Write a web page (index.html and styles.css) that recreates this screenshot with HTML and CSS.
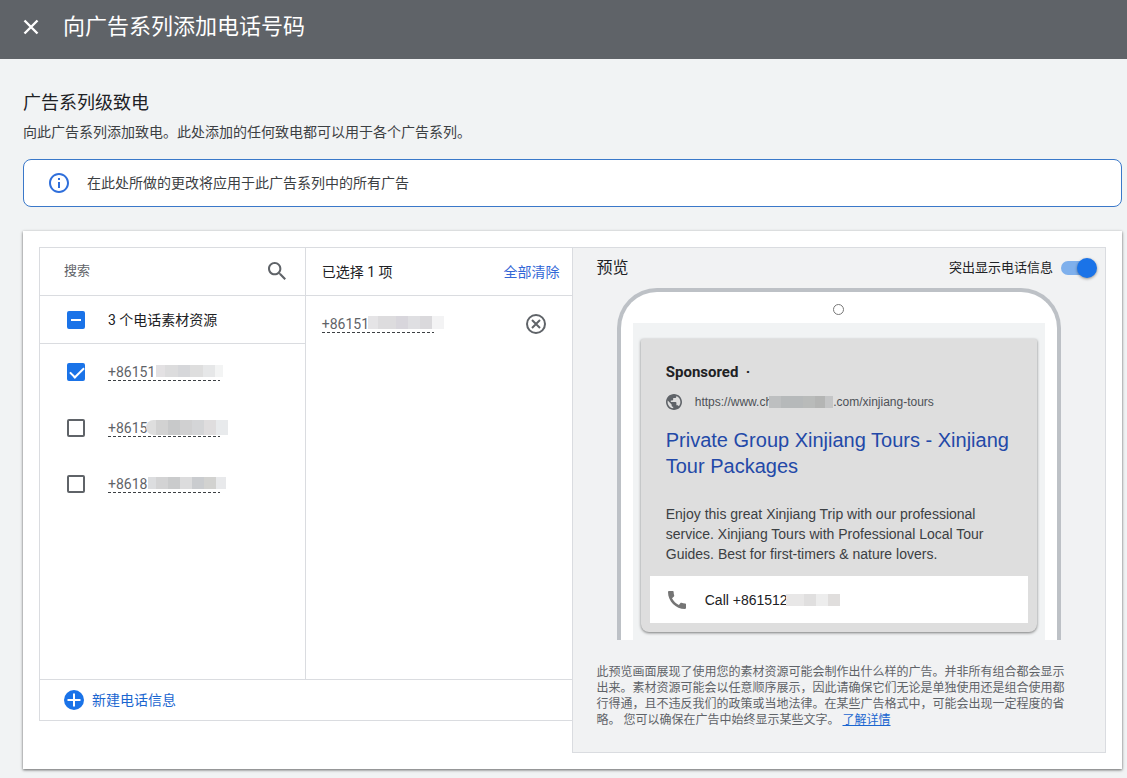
FILE: index.html
```html
<!DOCTYPE html>
<html lang="zh-CN">
<head>
<meta charset="utf-8">
<meta name="viewport" content="width=device-width, initial-scale=1">
<title>向广告系列添加电话号码</title>
<link rel="stylesheet" href="styles.css">
</head>
<body>
<header class="topbar">
  <button class="icon-button" type="button" aria-label="关闭">
    <svg class="icon-close" viewBox="0 0 16 16" aria-hidden="true"><path d="M1.5 1.5l13 13M14.5 1.5l-13 13"/></svg>
  </button>
  <h1 class="topbar-title">向广告系列添加电话号码</h1>
</header>

<main class="page">
  <h2 class="section-title">广告系列级致电</h2>
  <p class="section-text">向此广告系列添加致电。此处添加的任何致电都可以用于各个广告系列。</p>

  <div class="notice">
    <svg class="icon-info" viewBox="2 2 20 20" aria-hidden="true"><path d="M11 7h2v2h-2zm0 4h2v6h-2zm1-9C6.48 2 2 6.48 2 12s4.480 10 10 10 10-4.480 10-10S17.520 2 12 2zm0 18c-4.410 0-8-3.590-8-8s3.590-8 8-8 8 3.590 8 8-3.590 8-8 8z"/></svg>
    <span>在此处所做的更改将应用于此广告系列中的所有广告</span>
  </div>

  <div class="card">
    <div class="picker">
      <section class="column">
        <div class="row search-row">
          <input class="search" type="text" placeholder="搜索" aria-label="搜索">
          <button class="icon-button" type="button" aria-label="搜索">
            <svg class="icon-search" viewBox="3 3 17.500 17.500" aria-hidden="true"><path d="M15.500 14h-.79l-.28-.27C15.410 12.590 16 11.110 16 9.500 16 5.910 13.090 3 9.500 3S3 5.910 3 9.500 5.910 16 9.500 16c1.610 0 3.090-.59 4.230-1.570l.27.28v.79l5 4.990L20.490 19l-4.990-5zm-6 0C7.010 14 5 11.990 5 9.500S7.010 5 9.500 5 14 7.010 14 9.500 11.990 14 9.500 14z"/></svg>
          </button>
        </div>
        <label class="row option">
          <input class="checkbox checkbox-mixed" type="checkbox" aria-checked="mixed">
          <span>3 个电话素材资源</span>
        </label>
        <label class="option option-tall">
          <input class="checkbox" type="checkbox" checked>
          <span class="number">+86151<span class="mask mask-a"></span></span>
        </label>
        <label class="option option-tall">
          <input class="checkbox" type="checkbox">
          <span class="number">+86151<span class="mask mask-b"></span></span>
        </label>
        <label class="option option-tall">
          <input class="checkbox" type="checkbox">
          <span class="number">+8618<span class="mask mask-c"></span></span>
        </label>
      </section>

      <section class="column column-selected">
        <div class="row selected-head">
          <span>已选择 1 项</span>
          <button class="text-button" type="button">全部清除</button>
        </div>
        <div class="selected-item">
          <span class="number">+86151<span class="mask mask-d"></span></span>
          <button class="icon-button" type="button" aria-label="移除">
            <svg class="icon-remove" viewBox="0 0 20 20" aria-hidden="true"><circle cx="10" cy="10" r="9"/><path d="M6 6l8 8M14 6l-8 8"/></svg>
          </button>
        </div>
      </section>

      <div class="create">
        <button class="text-button create-button" type="button">
          <svg class="icon-add" viewBox="0 0 20 20" aria-hidden="true"><circle cx="10" cy="10" r="10"/><path d="M10 3.500v13M3.500 10h13"/></svg>
          <span>新建电话信息</span>
        </button>
      </div>
    </div>

    <section class="preview">
      <div class="preview-head">
        <h3 class="preview-title">预览</h3>
        <label class="toggle-label">
          <span>突出显示电话信息</span>
          <input class="toggle" type="checkbox" role="switch" checked>
        </label>
      </div>
      <div class="phone">
        <div class="phone-camera"></div>
        <div class="phone-screen">
          <article class="ad">
            <div class="ad-body">
              <div class="ad-sponsored">Sponsored&nbsp; ·</div>
              <div class="ad-url">
                <svg class="icon-globe" viewBox="2 2 20 20" aria-hidden="true"><path d="M12 2C6.480 2 2 6.480 2 12s4.480 10 10 10 10-4.480 10-10S17.520 2 12 2zm-1 17.930c-3.950-.49-7-3.850-7-7.930 0-.62.080-1.210.21-1.790L9 15v1c0 1.100.9 2 2 2v1.930zm6.900-2.540c-.26-.81-1-1.390-1.900-1.390h-1v-3c0-.55-.45-1-1-1H8v-2h2c.55 0 1-.45 1-1V7h2c1.100 0 2-.9 2-2v-.41c2.930 1.190 5 4.060 5 7.410 0 2.080-.8 3.970-2.100 5.390z"/></svg>
                <span>https://www.ch</span><span class="url-mask"></span><span>.com/xinjiang-tours</span>
              </div>
              <div class="ad-title">Private Group Xinjiang Tours - Xinjiang Tour Packages</div>
              <p class="ad-text">Enjoy this great Xinjiang Trip with our professional service. Xinjiang Tours with Professional Local Tour Guides. Best for first-timers &amp; nature lovers.</p>
            </div>
            <div class="ad-call">
              <svg class="icon-phone" viewBox="3 3 18 18" aria-hidden="true"><path d="M20.010 15.380c-1.230 0-2.420-.2-3.530-.56-.35-.12-.74-.03-1.010.24l-1.570 1.970c-2.830-1.350-5.480-3.900-6.890-6.830l1.950-1.660c.27-.28.35-.67.24-1.020-.37-1.110-.56-2.300-.56-3.530 0-.54-.45-.99-.99-.99H4.190C3.650 3 3 3.240 3 3.990 3 13.280 10.730 21 20.010 21c.71 0 .99-.63.99-1.180v-3.450c0-.54-.45-.99-.99-.99z"/></svg>
              <span>Call +861512</span><span class="call-mask"></span>
            </div>
          </article>
        </div>
      </div>
      <p class="preview-note"><span>此预览画面展现了使用您的素材资源可能会制作出什么样的广告。并非所有组合都会显示出来。素材资源可能会以任意顺序展示，因此请确保它们无论是单独使用还是组合使用都行得通，且不违反我们的政策或当地法律。在某些广告格式中，可能会出现一定程度的省略。</span> <span>您可以确保在广告中始终显示某些文字。</span> <a class="link" href="#">了解详情</a></p>
    </section>
  </div>
</main>
</body>
</html>
```
FILE: styles.css
```css
* {
  box-sizing: border-box;
}

body {
  margin: 0;
  background: #f1f3f4;
  color: #202124;
  font: 14px/20px Roboto, "Noto Sans CJK SC", sans-serif;
}

h1, h2, h3, p {
  margin: 0;
  font-weight: 400;
}

button, input {
  font: inherit;
  color: inherit;
  margin: 0;
}

button {
  padding: 0;
  border: 0;
  background: none;
  cursor: pointer;
}

svg {
  display: block;
  flex: none;
  fill: currentColor;
}

.icon-button {
  display: flex;
  flex: none;
  color: #5f6368;
}

.text-button {
  color: #3367d6;
}

/* Top bar */
.topbar {
  display: flex;
  align-items: center;
  gap: 24px;
  padding: 0 23px 5px;
  background: #5f6368;
}

.topbar .icon-button,
.topbar-title {
  color: #fff;
}

.topbar-title {
  font-size: 22px;
  line-height: 54px;
  font-weight: 400;
}

.icon-close {
  width: 16px;
  height: 16px;
  fill: none;
  stroke: currentColor;
  stroke-width: 2.4;
}

/* Page */
.page {
  padding: 32px 5px 9px 23px;
}

.section-title {
  font-size: 18px;
  line-height: 24px;
}

.section-text {
  margin-top: 7px;
  color: #3c4043;
}

.notice {
  display: flex;
  align-items: center;
  gap: 18px;
  min-height: 48px;
  margin-top: 17px;
  padding: 0 25px;
  border: 1px solid #3a78c9;
  border-radius: 8px;
  background: #fff;
  color: #3c4043;
}

.icon-info {
  width: 20px;
  height: 20px;
  color: #2f6fdb;
}

.card {
  display: grid;
  grid-template-columns: calc(50% - 1px) 1fr;
  align-items: start;
  margin-top: 24px;
  padding: 16px;
  background: #fff;
  box-shadow: 0 1px 3px rgba(0, 0, 0, .45), 0 1px 2px rgba(0, 0, 0, .2);
}

/* Number picker */
.picker {
  display: grid;
  grid-template-columns: calc(50% - 1px) 1fr;
  border: 1px solid #dadce0;
  border-right: 0;
}

.column {
  min-height: 431px;
}

.column-selected {
  border-left: 1px solid #dadce0;
}

.row {
  display: flex;
  align-items: center;
  min-height: 48px;
  border-bottom: 1px solid #dadce0;
}

.search-row {
  padding: 0 19px 2px 24px;
}

.search {
  flex: 1;
  min-width: 0;
  padding: 0;
  border: 0;
  outline: 0;
  background: none;
  font-size: 13px;
}

.search::placeholder {
  color: #5f6368;
  opacity: 1;
}

.icon-search {
  width: 18px;
  height: 18px;
}

.option {
  display: flex;
  align-items: center;
  gap: 23px;
  padding-left: 27px;
}

.option-tall {
  min-height: 56px;
}

.checkbox {
  position: relative;
  flex: none;
  width: 18px;
  height: 18px;
  border: 2px solid #5f6368;
  border-radius: 2px;
  appearance: none;
}

.checkbox:checked,
.checkbox-mixed {
  border-color: #1a73e8;
  background: #1a73e8;
}

.checkbox:checked::after {
  content: "";
  position: absolute;
  left: 4px;
  top: -1px;
  width: 6px;
  height: 12px;
  border: solid #fff;
  border-width: 0 2px 2px 0;
  transform: rotate(45deg);
}

.checkbox-mixed::after {
  content: "";
  position: absolute;
  left: 2px;
  top: 6px;
  width: 10px;
  height: 2px;
  background: #fff;
}

.number {
  position: relative;
  width: 112px;
  line-height: 17px;
  color: #5f6368;
  background: repeating-linear-gradient(90deg, #3c4043 0 3px, transparent 3px 5px) left bottom / 100% 1px no-repeat;
}

/* Pixelated cover over the private digits */
.mask {
  position: absolute;
  left: 48px;
  top: 1px;
  width: 67px;
  height: 12px;
  background: linear-gradient(90deg, #e3e1e3 0 9px, #dcdcdd 9px 22px, #d6d7da 22px 34px, #dedede 34px 47px, #e6e7e8 47px 59px, #f3f4f4 59px);
}

.mask-b {
  left: 38px;
  top: 0;
  width: 82px;
  height: 15px;
  border-radius: 8px 0 0 8px;
  background: linear-gradient(90deg, #dedede 0 10px, #d2d2d2 10px 22px, #c8c9ca 22px 34px, #d0d0d1 34px 46px, #d4d5d7 46px 58px, #dfddde 58px 70px, #e8eaec 70px);
}

.mask-c {
  left: 40px;
  width: 78px;
  background: linear-gradient(90deg, #dcdddf 0 8px, #d3d3d4 8px 20px, #cacbcc 20px 32px, #dcdcdd 32px 44px, #cacccf 44px 56px, #d2d2d0 56px 68px, #e8e9eb 68px);
}

.mask-d {
  left: 46px;
  top: 0;
  width: 76px;
  height: 13px;
  background: linear-gradient(90deg, #e5e4e6 0 10px, #dddcde 10px 28px, #d8d6dc 28px 40px, #dfdfe2 40px 52px, #dad9dc 52px 64px, #f3f3f4 64px);
}

.selected-head {
  justify-content: space-between;
  padding: 0 12px 0 16px;
}

.selected-item {
  display: flex;
  align-items: center;
  justify-content: space-between;
  min-height: 56px;
  padding: 0 26px 0 16px;
}

.icon-remove {
  width: 20px;
  height: 20px;
  fill: none;
  stroke: currentColor;
  stroke-width: 2;
}

.create {
  grid-column: 1 / -1;
  padding: 10px 24px;
  border-top: 1px solid #dadce0;
}

.create-button {
  display: flex;
  align-items: center;
  gap: 8px;
  color: #1a66d0;
}

.icon-add {
  width: 20px;
  height: 20px;
  fill: #1a73e8;
  stroke: none;
}

.icon-add path {
  stroke: #fff;
  stroke-width: 2;
}

/* Preview */
.preview {
  padding-bottom: 24px;
  border: 1px solid #dadce0;
  background: #f1f2f3;
}

.preview-head {
  display: flex;
  align-items: center;
  justify-content: space-between;
  min-height: 40px;
  padding: 0 8px 0 24px;
}

.preview-title {
  font-size: 16px;
}

.toggle-label {
  display: flex;
  align-items: center;
  gap: 8px;
  font-size: 13px;
}

.toggle {
  position: relative;
  width: 36px;
  height: 20px;
  appearance: none;
}

.toggle::before {
  content: "";
  position: absolute;
  left: 0;
  right: 2px;
  top: 3px;
  height: 14px;
  border-radius: 7px;
  background: #7fb0ec;
}

.toggle::after {
  content: "";
  position: absolute;
  right: 0;
  top: 0;
  width: 20px;
  height: 20px;
  border-radius: 50%;
  background: #1a73e8;
  box-shadow: 0 1px 3px rgba(0, 0, 0, .4);
}

.phone {
  max-width: 444px;
  margin: 0 auto;
  padding: 0 12px;
  border: 4px solid #bdc1c6;
  border-bottom: 0;
  border-radius: 40px 40px 0 0;
  background: #fff;
}

.phone-camera {
  width: 11px;
  height: 11px;
  margin: 12px auto 8px;
  border: 1px solid #777;
  border-radius: 50%;
}

.phone-screen {
  padding: 16px 8px 8px;
  background: #f1f3f4;
}

.ad {
  padding: 0 9px 9px;
  border-radius: 2px 2px 8px 8px;
  background: #dedede;
  box-shadow: 0 1px 3px rgba(0, 0, 0, .5);
  color: #3c4043;
  font-family: "Liberation Sans", Arial, sans-serif;
}

.ad-body {
  padding: 23px 16px 12px;
}

.ad-sponsored {
  color: #202124;
  font: 700 15px/20px Roboto, sans-serif;
}

.ad-url {
  display: flex;
  align-items: center;
  margin-top: 10px;
  color: #4d5156;
  font-size: 12px;
}

.icon-globe {
  width: 16px;
  height: 16px;
  margin-right: 13px;
  color: #5f6368;
}

.url-mask {
  position: relative;
  width: 64px;
  height: 12px;
  margin-left: -3px;
  background: linear-gradient(90deg, #bdbfc0 0 12px, #b6b9ba 12px 34px, #b9bbba 34px 46px, #b4b5b4 46px 56px, #c4c5c6 56px);
}

.ad-title {
  margin-top: 15px;
  color: #2349a8;
  font-size: 20px;
  line-height: 26px;
}

.ad-text {
  margin-top: 25px;
}

.ad-call {
  display: flex;
  align-items: center;
  min-height: 47px;
  padding-left: 18px;
  background: #fff;
  color: #202124;
}

.icon-phone {
  width: 18px;
  height: 18px;
  margin-right: 19px;
  color: #757575;
}

.call-mask {
  width: 54px;
  height: 12px;
  margin-left: -2px;
  background: linear-gradient(90deg, #e8e7e7 0 18px, #e0dfdf 18px 30px, #ededed 30px 42px, #e0dedd 42px);
}

.preview-note {
  padding: 0 29px 0 24px;
  margin-top: 24px;
  color: #5f6368;
  font-size: 12px;
  line-height: 16px;
}

.link {
  color: #1a66d0;
}
```
